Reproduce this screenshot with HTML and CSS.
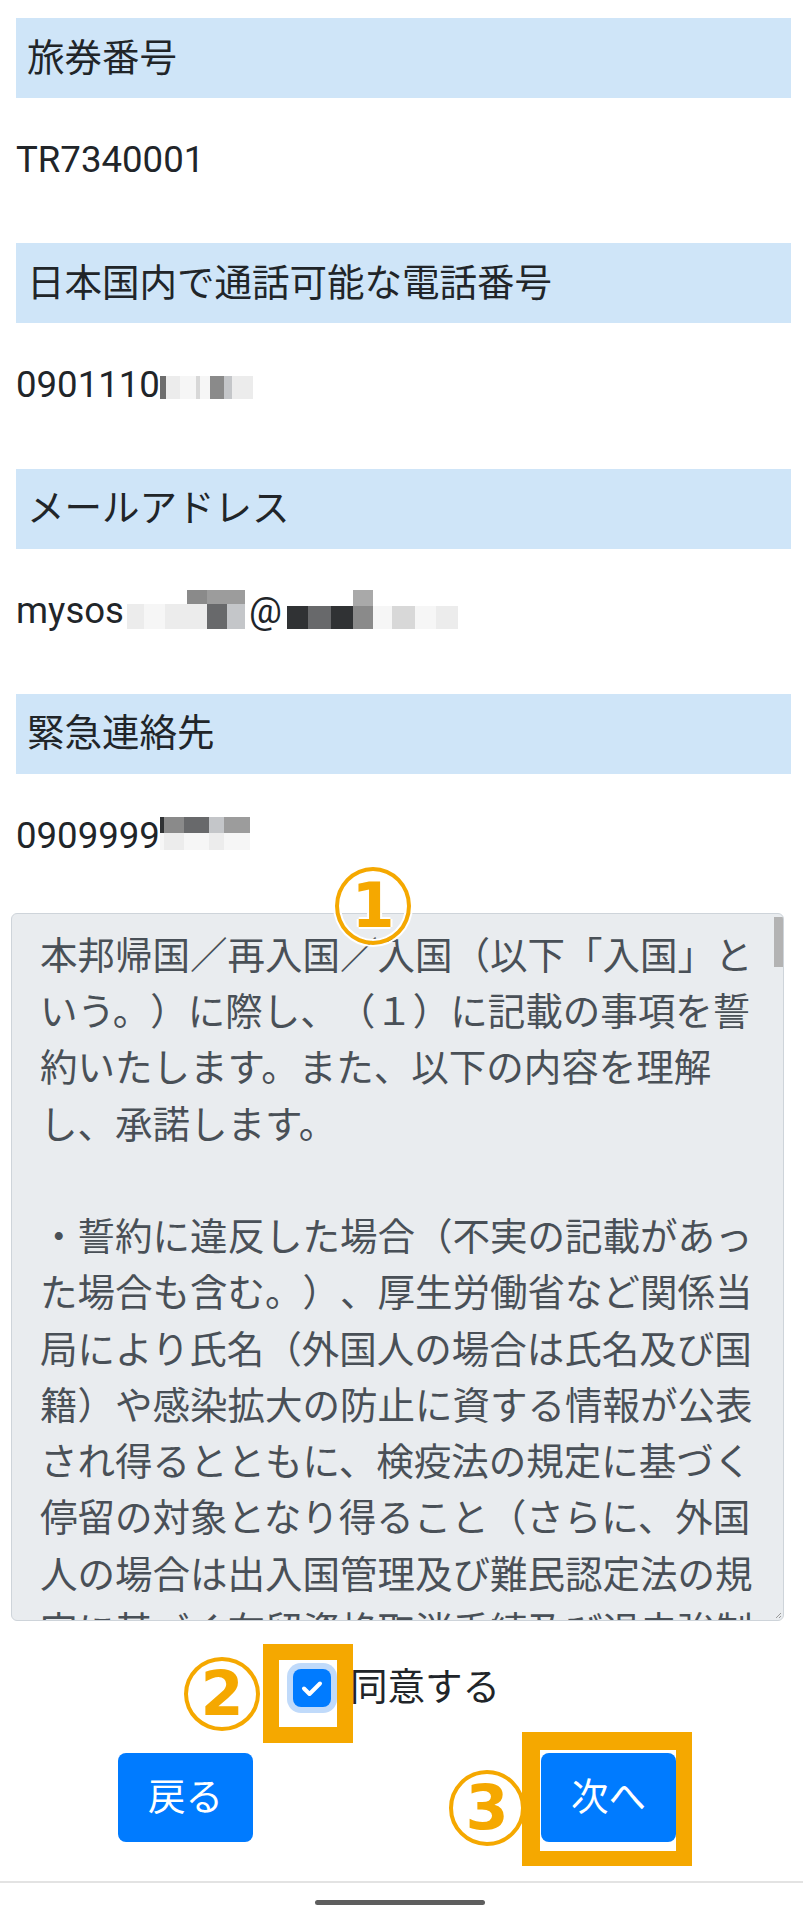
FILE: index.html
```html
<!DOCTYPE html>
<html lang="ja">
<head>
<meta charset="utf-8">
<title>誓約確認</title>
<link rel="stylesheet" href="styles.css">
</head>
<body>
<div class="page">
  <main class="content">
    <section class="field">
      <h2 class="field-label">旅券番号</h2>
      <p class="field-value">TR7340001</p>
    </section>
    <section class="field">
      <h2 class="field-label">日本国内で通話可能な電話番号</h2>
      <p class="field-value">0901110<span class="mosaic mosaic-phone" aria-hidden="true"><i class="g1"></i><i class="g8"></i><i class="g9"></i><i class="g7"></i><i class="g9"></i><i class="g3"></i><i class="g6"></i><i class="g8"></i></span></p>
    </section>
    <section class="field">
      <h2 class="field-label">メールアドレス</h2>
      <p class="field-value">mysos<span class="mosaic mosaic-mail-a" aria-hidden="true"><i></i><i></i><i></i><i class="g3"></i><i class="g4"></i><i class="g4"></i><i class="g8"></i><i class="g9"></i><i class="g8"></i><i class="g8"></i><i class="g2"></i><i class="g6"></i></span>@<span class="mosaic mosaic-mail-b" aria-hidden="true"><i></i><i></i><i></i><i class="g5"></i><i></i><i></i><i></i><i></i><i class="g0"></i><i class="g2"></i><i class="g0"></i><i class="g3"></i><i class="g9"></i><i class="g7"></i><i class="g9"></i><i class="g8"></i></span></p>
    </section>
    <section class="field">
      <h2 class="field-label">緊急連絡先</h2>
      <p class="field-value">0909999<span class="mosaic mosaic-emergency" aria-hidden="true"><i class="g0"></i><i class="g3"></i><i class="g2"></i><i class="g6"></i><i class="g4"></i><i class="g9"></i><i class="g8"></i><i class="g9"></i><i class="g8"></i><i class="g9"></i></span></p>
    </section>

    <div class="pledge">
      <div class="pledge-text">本邦帰国／再入国／入国（以下「入国」という。）に際し、（１）に記載の事項を誓約いたします。また、以下の内容を理解し、承諾します。<br><br>・誓約に違反した場合（不実の記載があった場合も含む。）、厚生労働省など関係当局により氏名（外国人の場合は氏名及び国籍）や感染拡大の防止に資する情報が公表され得るとともに、検疫法の規定に基づく停留の対象となり得ること（さらに、外国人の場合は出入国管理及び難民認定法の規定に基づく在留資格取消手続及び退去強制手続等の対象となり得ること）。</div>
      <span class="scroll-thumb"></span>
      <svg class="grip" width="8" height="8" viewBox="0 0 8 8"><path d="M7 2 L2 7 M7 5 L5 7" stroke="#9a9a9a" stroke-width="1"/></svg>
    </div>

    <label class="agree">
      <span class="checkbox"><svg width="38" height="38" viewBox="0 0 38 38"><path d="M11 19.5 L16.5 25 L27 14.5" fill="none" stroke="#fff" stroke-width="4" stroke-linecap="round" stroke-linejoin="round"/></svg></span>
      <span class="agree-text">同意する</span>
    </label>

    <div class="actions">
      <button class="btn" type="button">戻る</button>
      <button class="btn" type="button">次へ</button>
    </div>
  </main>

  <footer class="nav-bar"><span class="nav-handle"></span></footer>

  <span class="marker marker-1">1</span>
  <span class="marker marker-2">2</span>
  <span class="marker marker-3">3</span>
  <span class="highlight highlight-check"></span>
  <span class="highlight highlight-next"></span>
</div>
</body>
</html>
```

FILE: styles.css
```css
* { box-sizing: border-box; }

html, body {
  margin: 0;
  padding: 0;
  background: #ffffff;
}

body {
  font-family: Roboto, "Noto Sans CJK JP", sans-serif;
  font-size: 37.5px;
  color: #212529;
}

.page {
  position: relative;
  width: 803px;
  height: 1920px;
  overflow: hidden;
}

.content {
  padding-top: 18px;
}

.field-label {
  margin: 0 12px 0 16px;
  height: 80px;
  padding-left: 11px;
  display: flex;
  align-items: center;
  background: #cfe5f8;
  font-size: 37.5px;
  font-weight: 400;
  line-height: 1.2;
  color: #212529;
}

.field-value {
  margin: 0;
  height: 145.33px;
  padding: 40px 0 0 16px;
  font-size: 36.6px;
  line-height: 44px;
  white-space: nowrap;
}

.field:last-of-type .field-value {
  height: 139px;
}

/* pixelated privacy mosaics */
.mosaic {
  display: inline-grid;
  vertical-align: top;
}
.mosaic i { display: block; }

.mosaic-phone {
  margin-top: 13px;
  grid-template-columns: 6px 14px 16px 4px 10px 14px 8px 21px;
  grid-template-rows: 23px;
}
.mosaic-mail-a {
  margin-top: 1px;
  margin-left: 3px;
  margin-right: 4px;
  grid-template-columns: 17px 21px 22px 20px 20px 18px;
  grid-template-rows: 14px 25px;
}
.mosaic-mail-b {
  margin-top: 1px;
  margin-left: 5px;
  grid-template-columns: 21px 23px 22px 20px 19px 23px 21px 22px;
  grid-template-rows: 16px 23px;
}
.mosaic-emergency {
  margin-top: 3px;
  grid-template-columns: 4px 20px 25px 15px 26px;
  grid-template-rows: 16px 17px;
}

.g0 { background: #303234; }
.g1 { background: #6d6d6d; }
.g2 { background: #68696b; }
.g3 { background: #8a8a8a; }
.g4 { background: #9c9c9c; }
.g5 { background: #a9a9a9; }
.g6 { background: #c4c6c9; }
.g7 { background: #d8d8d8; }
.g8 { background: #ececec; }
.g9 { background: #f6f6f6; }

/* consent text box */
.pledge {
  position: relative;
  margin-left: 11px;
  width: 773px;
  height: 708px;
  background: #e9ecef;
  border: 1px solid #ced4da;
  border-radius: 6px;
  overflow: hidden;
}

.pledge-text {
  padding: 14px 28px 0 28px;
  font-size: 37.5px;
  line-height: 56.25px;
  color: #495057;
  text-spacing-trim: space-all;
  line-break: strict;
}

.scroll-thumb {
  position: absolute;
  top: 3px;
  right: 0;
  width: 9px;
  height: 50px;
  background: #b3b3b3;
}

.grip {
  position: absolute;
  right: 1px;
  bottom: 1px;
}

/* agree checkbox */
.agree {
  margin-top: 48px;
  height: 38px;
  padding-right: 10px;
  display: flex;
  align-items: center;
  justify-content: center;
  gap: 19px;
}

.checkbox {
  width: 38px;
  height: 38px;
  border-radius: 8px;
  background: #007bff;
  box-shadow: 0 0 0 6px #c0dafa;
  display: block;
}
.checkbox svg { display: block; }

.agree-text {
  font-size: 37.5px;
  line-height: 1;
  color: #212529;
}

/* buttons */
.actions {
  margin-top: 46px;
  padding: 0 127px 0 118px;
  display: flex;
  justify-content: space-between;
}

.btn {
  width: 135px;
  height: 89px;
  padding: 0;
  border: 0;
  border-radius: 8px;
  background: #007bff;
  color: #ffffff;
  font-family: Roboto, "Noto Sans CJK JP", sans-serif;
  font-size: 37.5px;
  line-height: 1;
}

/* android navigation bar */
.nav-bar {
  margin-top: 39px;
  border-top: 2px solid #e3e3e3;
  padding-top: 17px;
  display: flex;
  justify-content: center;
}

.nav-handle {
  width: 170px;
  height: 5px;
  border-radius: 3px;
  background: #5e5e5e;
  margin-left: -4px;
}

/* orange annotation overlays */
.marker {
  position: absolute;
  width: 76px;
  height: 78px;
  border: 4px solid #f5a800;
  border-radius: 50%;
  box-shadow: 0 0 0 2px #ffffff, inset 0 0 0 2px #ffffff;
  display: flex;
  align-items: center;
  justify-content: center;
  font-family: "DejaVu Sans", sans-serif;
  font-weight: 700;
  font-size: 62px;
  line-height: 1;
  color: #f5a800;
  text-shadow: 2px 0 0 #fff, -2px 0 0 #fff, 0 2px 0 #fff, 0 -2px 0 #fff;
}
.marker-1 { left: 335px; top: 867px; }
.marker-2 { left: 184px; top: 1657px; width: 76px; height: 74px; }
.marker-3 { left: 449px; top: 1770px; width: 76px; height: 76px; }

.highlight {
  position: absolute;
  border: 16px solid #f5a800;
}
.highlight-check { left: 263px; top: 1644px; width: 90px; height: 99px; }
.highlight-next { left: 522px; top: 1732px; width: 170px; height: 134px; border-width: 18px 16px 15px 18px; }
```
